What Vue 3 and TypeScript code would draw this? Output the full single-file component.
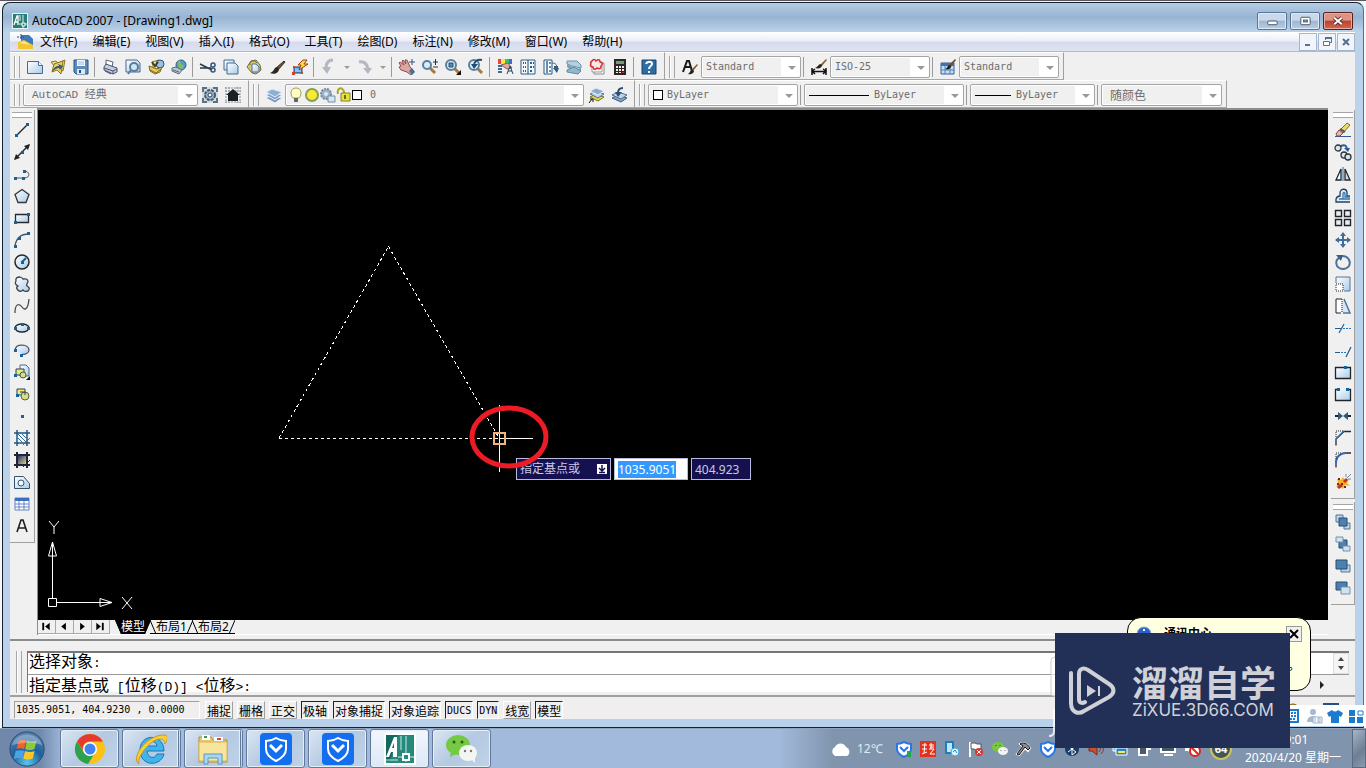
<script setup lang="ts">
import { computed, onMounted, ref } from 'vue'

interface Tool { id: string; label: string; kind?: 'sep' | 'drop' }

const t = (id: string, label: string): Tool => ({ id, label })
const sep = (id: string): Tool => ({ id, label: '', kind: 'sep' })
const drop = (id: string, label: string): Tool => ({ id, label, kind: 'drop' })

const menus = ['文件(F)', '编辑(E)', '视图(V)', '插入(I)', '格式(O)', '工具(T)', '绘图(D)', '标注(N)', '修改(M)', '窗口(W)', '帮助(H)']

const standardTools: Tool[] = [
  t('new', '新建'), t('open', '打开'), t('save', '保存'), sep('s1'),
  t('print', '打印'), t('preview', '打印预览'), t('publish', '发布'), t('web', '三维 DWF'), sep('s2'),
  t('cut', '剪切'), t('copyclip', '复制'), t('paste', '粘贴'), t('match', '特性匹配'), t('blockedit', '块编辑器'), sep('s3'),
  t('undo', '放弃'), drop('d1', '放弃列表'), t('redo', '重做'), drop('d2', '重做列表'), sep('s4'),
  t('pan', '实时平移'), t('zoomrt', '实时缩放'), t('zoomwin', '窗口缩放'), t('zoomprev', '缩放上一个'), sep('s5'),
  t('props', '特性'), t('center', '设计中心'), t('palette', '工具选项板'), t('sheet', '图纸集'), t('markup', '标记集'), t('calc', '计算器'), sep('s6'),
  t('help', '帮助'),
]

const drawTools: Tool[] = [
  t('line', '直线'), t('xline', '构造线'), t('pline', '多段线'), t('polygon', '正多边形'), t('rect', '矩形'),
  t('arc', '圆弧'), t('circle', '圆'), t('cloud', '修订云线'), t('spline', '样条曲线'), t('ellipse', '椭圆'),
  t('ellarc', '椭圆弧'), t('insert', '插入块'), t('block', '创建块'), t('point', '点'), t('hatch', '图案填充'),
  t('gradient', '渐变色'), t('region', '面域'), t('table', '表格'), t('mtext', '多行文字'),
]

const modifyTools: Tool[] = [
  t('erase', '删除'), t('copy', '复制对象'), t('mirror', '镜像'), t('offset', '偏移'), t('array', '阵列'), t('move', '移动'),
  t('rotate', '旋转'), t('scale', '缩放'), t('stretch', '拉伸'), t('trim', '修剪'), t('extend', '延伸'), t('breakpt', '打断于点'),
  t('break', '打断'), t('join', '合并'), t('chamfer', '倒角'), t('fillet', '圆角'), t('explode', '分解'),
]

const orderTools: Tool[] = [t('front', '前置'), t('back', '后置'), t('above', '置于对象之上'), t('under', '置于对象之下')]

const dot = (x: number, y: number) => `<rect x="${x - 1}" y="${y - 1}" width="3" height="3" fill="#14639c"/>`
const lens = `<path d="M9 9l5 5" stroke="#a87937" stroke-width="3"/><circle cx="6" cy="6" r="5" fill="#d9edfb" stroke="#5c7f9d" stroke-width="2"/>`
const stack = `<path d="M0 11l6-3 10 3-7 5z" fill="#7897b8" stroke="#e7eff7"/><path d="M0 8l6-3 10 3-7 5z" fill="#7fa1c5" stroke="#e7eff7"/><path d="M0 5l6-3 10 3-7 5z" fill="#8fb0d4" stroke="#e7eff7"/>`
const shield = `<path d="M8 1c2 1 4 2 7 2v5c0 4-3 6-7 8-4-2-7-4-7-8V3c3 0 5-1 7-2z" fill="#fff" stroke="#2877e8" stroke-width="2"/><path d="M4 6l4 4 4-4" fill="none" stroke="#2877e8" stroke-width="2"/>`

const glyphs: Record<string, string> = {
  new: `<path d="M.5 2.500h11l4 4v8H.5z" fill="url(#ice)" stroke="#446b91"/><path d="M11.500 2.500v4h4" fill="#fff" stroke="#446b91"/>`,
  open: `<path d="M1 3l5-1 2 2 7-3-2 11-7-3z" fill="#f2df78" stroke="#8b7521"/><path d="M2 13l2-8 9-3-2 13-4-4z" fill="#e9d162" stroke="#8b7521"/><path d="M2 13c2-5 4-6 7-6l-1-2 5 2-3 4-1-2c-2 0-4 1-7 4z" fill="#3b5a72"/>`,
  save: `<path d="M1 1h14v14H3l-2-2z" fill="#5a8cc0" stroke="#28557f"/><path d="M4 1h8v6H4z" fill="#f5f9fd"/><path d="M5 3h6M5 5h6" stroke="#9fb9d1"/><path d="M4 10h8v5H4z" fill="#dde7f0"/><path d="M6 11h2v3H6z" fill="#2b5078"/>`,
  print: `<path d="M4 1l7 2-1 5-6-2z" fill="#fff" stroke="#56637b"/><path d="M2 8l2-3 8 3 3 1v4l-4 2-9-4z" fill="#c5cee0" stroke="#46536e"/><path d="M2 9l9 3 4-2M11 12v3M3 12l6 3" fill="none" stroke="#46536e"/>`,
  preview: `<path d="M1 1h11l3 3v9H1z" fill="url(#ice)" stroke="#446b91"/><circle cx="9" cy="8" r="4" fill="#cee7f7" stroke="#5b7c99" stroke-width="2"/><path d="M6 11l-3 4" stroke="#5b7c99" stroke-width="2"/>`,
  publish: `<path d="M4 3l7-2 2 7-7 3z" fill="#faf2a4" stroke="#877727"/><circle cx="12" cy="5" r="4" fill="#9cc0e0" stroke="#27537c"/><path d="M1 7l8 3 5-2-2 5-5 2-5-3z" fill="#e8c84e" stroke="#7b6a28"/><path d="M4 3l3 4 3-4" fill="none" stroke="#493c22" stroke-width="2"/><path d="M2 11l6 3 5-4" fill="none" stroke="#7b6a28"/>`,
  web: `<circle cx="10" cy="6" r="5" fill="#539ac9" stroke="#31608e"/><path d="M8 1c3 2 0 4 4 5 2 1 0 4-2 5-3-2-4-7-2-10z" fill="#83bc68"/><path d="M1 9l4-1 6 3-3 4-7-3z" fill="#b9c6d6" stroke="#596a80"/><path d="M2 11l6 2" stroke="#596a80"/>`,
  cut: `<path d="M0 5l12 6M0 9h11" stroke="#27394c" stroke-width="1.500"/><circle cx="13" cy="6" r="2" fill="none" stroke="#34567a" stroke-width="1.500"/><circle cx="13" cy="11" r="2" fill="none" stroke="#34567a" stroke-width="1.500"/><path d="M9 9l3-2" stroke="#34567a"/>`,
  copyclip: `<path d="M1 1h10v10H1z" fill="url(#ice)" stroke="#446b91"/><path d="M4 4h8l3 3v8H4z" fill="url(#ice)" stroke="#446b91"/>`,
  paste: `<path d="M5 2l5-1 4 5 1 5-5 4-4-1-5-6z" fill="#d5c76b" stroke="#736b37"/><path d="M6 5h4l3 3v5H6z" fill="url(#ice)" stroke="#54718e"/><path d="M4 6c-1-4 4-6 7-2" fill="none" stroke="#69624a"/>`,
  match: `<path d="M15 2L7 9l2 2 7-8z" fill="#7a542d" stroke="#3c2b1b"/><path d="M8 8c-3 0-2 4-7 6 4 2 9 0 9-4z" fill="#2b2722"/>`,
  blockedit: `<path d="M2 8h8v6H2z" fill="#5a9fe5" stroke="#243f63"/><path d="M3 9l6 1v3H3z" fill="#90c1ef"/><path d="M11 1h4l-3 4h4L7 11l2-5H6z" fill="#ffd83c" stroke="#9b3e1c"/><path d="M0 13h3v3H0zM9 13h2v2H9zM1 7h2v2H1z" fill="#d54128"/>`,
  undo: `<path d="M12 1C8 1 5 3 5 9" fill="none" stroke="#b1b8c0" stroke-width="3"/><path d="M1 8h9l-4 7z" fill="#b1b8c0"/>`,
  redo: `<path d="M2 3c5-1 8 2 9 7" fill="none" stroke="#b1b8c0" stroke-width="3"/><path d="M6 9h9l-4 6z" fill="#b1b8c0"/>`,
  pan: `<path d="M2 7L0 4l1-1 4 3-2-4 1-1 3 4-1-4h2l3 7 4 4-3 4-4-3-6-2-2-3z" fill="#dda7a1" stroke="#8b4e52"/><path d="M10 12l3-3 3 4-3 3z" fill="#47709a"/><path d="M13 0v6M10 3h6" stroke="#31547a"/>`,
  zoomrt: `<path d="M8 9l5 5" stroke="#a87937" stroke-width="3"/><circle cx="5" cy="6" r="4" fill="#d9edfb" stroke="#5c7f9d" stroke-width="2"/><path d="M11 3h5M13.500 0v6M11 8h5" stroke="#20354e"/>`,
  zoomwin: lens + `<path d="M4 4h4v4H4z" fill="#4f8cbb" stroke="#244e70"/><path d="M16 11v5h-5z" fill="#111"/>`,
  zoomprev: lens + `<path d="M14 1C9 0 6 3 6 6" fill="none" stroke="#244c70" stroke-width="2"/><path d="M3 5h7l-4 5z" fill="#244c70"/>`,
  props: `<path d="M1 0h3v5H1z" fill="#e43"/><path d="M4 0h4v5H4z" fill="#ee4"/><path d="M8 0h4v5H8z" fill="#4b6"/><path d="M12 0h3v5h-3z" fill="#46d"/><path d="M4 6l7-2 4 5-5 1z" fill="#dfaaa4" stroke="#8b5b58"/><path d="M1 7h4M1 10h4M1 13h4" stroke="#3c6998" stroke-width="2"/><path d="M10 15l3-8 3 8M11 12h4" fill="none" stroke="#294664"/>`,
  center: `<path d="M1 1h14v14H1z" fill="#f4f8fb" stroke="#2f5f8a"/><path d="M8 1v14" stroke="#1d446b"/><path d="M3 4h3M3 8h3M3 12h3" stroke="#1b669e" stroke-width="2" stroke-dasharray="1 1"/><path d="M10 3h2v2h-2zM13 3h1v2h-1zM10 7h2v2h-2zM13 7h1v2h-1zM10 11h2v2h-2z" fill="#1b669e"/>`,
  palette: `<path d="M1 1h8v14H1z" fill="#f5f9fc" stroke="#285880"/><path d="M4 2v12M6 4h2M6 8h2M6 12h2" stroke="#3a6991" stroke-width="1.500"/><path d="M9 4c4 0 5 2 5 6" fill="none" stroke="#355e7f"/><path d="M11 7h4v3h-4zM10 9h6l-2 5z" fill="#345d80"/>`,
  sheet: `<path d="M1 2h10l4 4v3l-9-2-5-2z" fill="#b5d0df" stroke="#6991b2"/><path d="M1 5l9 5 5-1v3l-7 2-7-6z" fill="#79a4bd"/><path d="M1 11l7-3 7 4-3 3-11-2z" fill="#8fb8cc" stroke="#6289a6"/>`,
  markup: `<path d="M5 4h10v11H5z" fill="#fff" stroke="#888"/><path d="M3 3h10v10H3z" fill="#f8f6f6" stroke="#999"/><path d="M3 2q2-3 4 0 4-3 4 1 4 1 1 4 0 4-4 2-3 3-4-1-4-1-2-3-1-2 1-3z" fill="#fbe7e6" stroke="#d42e2d" stroke-width="1.500"/>`,
  calc: `<path d="M2 0h12v16H2z" fill="#2d2524"/><path d="M4 2h8v3H4z" fill="#6b9f78"/><path d="M4 7h2v2H4zM7 7h2v2H7zM10 7h2v2h-2zM4 10h2v2H4zM7 10h2v2H7zM10 10h2v2h-2zM4 13h2v1H4zM7 13h2v1H7z" fill="#eee"/><path d="M10 13h2v1h-2z" fill="#d22"/>`,
  help: `<path d="M1 1h14v14H1z" fill="#2e6ca4" stroke="#17466f"/><path d="M5 5c1-3 6-3 6 0 0 2-3 2-3 5" fill="none" stroke="#fff" stroke-width="2"/><path d="M7 12h2v2H7z" fill="#fff"/>`,
  gear: `<path d="M0 0h16v16H0z" fill="#d4dce2"/><path d="M0 0h5v2H2v3H0zM11 0h5v5h-2V2h-3zM0 11h2v3h3v2H0zM14 11h2v5h-5v-2h3z" fill="#5b7184"/><circle cx="8" cy="8" r="5" fill="#9fb4c5" stroke="#40586e" stroke-width="2" stroke-dasharray="3 1"/><circle cx="8" cy="8" r="2" fill="#fff" stroke="#25405a"/>`,
  home: `<path d="M1 0v16M4 0v16M12 0v16M15 0v16M0 1h16M0 4h16M0 15h16" stroke="#8b9299" stroke-dasharray="2 1"/><path d="M8 2l7 6h-2v6H3V8H1z" fill="#1c2024"/>`,
  layers: stack,
  bulb: `<path d="M5 11C2 8 2 1 8 1s6 7 3 10z" fill="#ffffc4" stroke="#a39d52"/><path d="M6 12h4M6 14h4" stroke="#666" stroke-width="2"/>`,
  sun: `<circle cx="8" cy="8" r="6" fill="#f7ec31" stroke="#8d9c55" stroke-width="2"/>`,
  freeze: `<circle cx="6" cy="7" r="5" fill="#9eb5c9" stroke="#6f8ba5" stroke-width="2" stroke-dasharray="2 1"/><circle cx="6" cy="7" r="2" fill="#dbe6ee"/><path d="M8 9h7v6H8z" fill="#d9e6ee" stroke="#7190a8"/>`,
  lock: `<path d="M2 7C0 1 7-1 8 5v3" fill="none" stroke="#a9a62b" stroke-width="2"/><path d="M5 6h9v8H5z" fill="#e4e13c" stroke="#85841e"/><path d="M9 8v4" stroke="#6c6a10" stroke-width="2"/>`,
  makelayer: `<path d="M2 10l6-3 8 3-6 4z" fill="#e6d648" stroke="#777126"/><path d="M2 7l6-3 8 3-6 4z" fill="#bcd4e8" stroke="#54708c"/><path d="M2 4l6-3 8 3-6 4z" fill="#8caccc" stroke="#e7eff7"/><path d="M1 16l3-4M2 12h3v3" fill="none" stroke="#111"/>`,
  layerprev: `<path d="M1 11l6-3 9 3-6 4z" fill="#7fa1c5" stroke="#415f80"/><path d="M1 8l6-3 9 3-6 4z" fill="#bcd4e8" stroke="#54708c"/><path d="M12 1C8 1 7 3 7 6" fill="none" stroke="#294f75" stroke-width="2"/><path d="M4 5h7l-4 5z" fill="#294f75"/>`,
  textstyle: `<path d="M1 13L5 2h2l3 10M3 8h6" fill="none" stroke="#17191c" stroke-width="2"/><path d="M15 5l-5 5 1 2 5-6z" fill="#8a6130"/><path d="M10 10c-2 1-1 3-4 5 3 1 6-1 6-3z" fill="#24211e"/>`,
  dimstyle: `<path d="M1 9v7M15 9v7M1 12.500h14M4 10l-3 2 3 3M12 10l3 2-3 3" fill="none" stroke="#111" stroke-width="1.500"/><path d="M15 0L9 6l2 1 5-6z" fill="#8a6130"/><path d="M9 5c-2 1-2 3-5 4 4 1 7 0 7-3z" fill="#24211e"/>`,
  tablestyle: `<path d="M1 4h13v11H1z" fill="#c7def5" stroke="#315f94"/><path d="M1 4h13v3H1z" fill="#3e72b0"/><path d="M5 7v8M10 7v8M1 11h13" stroke="#4e82bb"/><path d="M15 0L9 6l2 2 5-7z" fill="#73502d"/><path d="M9 6c-2 1-1 3-4 4 3 1 6 0 6-3z" fill="#24211e"/>`,
  line: `<path d="M2 14L14 2" stroke="#262a2e" stroke-width="1.500"/>` + dot(2, 13) + dot(13, 2),
  xline: `<path d="M1 15L15 1" stroke="#262a2e" stroke-width="1.500"/><path d="M0 16l2-6 4 4zM16 0l-6 2 4 4z" fill="#222"/>` + dot(8, 8),
  pline: `<path d="M1 12h9c7 0 6-7 0-7" fill="none" stroke="#4c555d"/>` + dot(1, 12) + dot(9, 12) + dot(10, 5),
  polygon: `<path d="M8 1.500l7 5-3 8H4l-3-8z" fill="url(#ice)" stroke="#32373d" stroke-width="1.300"/>`,
  rect: `<path d="M1.500 4.500h13v8h-13z" fill="url(#ice)" stroke="#262a2e" stroke-width="1.300"/>` + dot(1, 12) + dot(14, 4),
  arc: `<path d="M1 14C2 7 6 2 15 2" fill="none" stroke="#4c555d" stroke-width="1.300"/>` + dot(1, 14) + dot(5, 6) + dot(14, 1),
  circle: `<circle cx="8" cy="8" r="7" fill="url(#ice)" stroke="#24282c" stroke-width="1.500"/><path d="M8 8l4-4" stroke="#14639c" stroke-width="2"/>` + dot(8, 8),
  cloud: `<path d="M2 5q-1-4 4-4 3 1 3 2 5-1 5 3-2 3-1 4 4 2 1 5-4 1-5-1-3 3-6-1-1-2 1-3-4-2-2-5z" fill="url(#ice)" stroke="#3c4147" stroke-width="1.300"/>`,
  spline: `<path d="M1 15C1 4 6 6 8 9s6 4 7-8" fill="none" stroke="#4a4e52" stroke-width="1.300"/>`,
  ellipse: `<ellipse cx="8" cy="8" rx="7" ry="4" fill="url(#ice)" stroke="#24282c" stroke-width="1.300"/>` + dot(1, 8) + dot(14, 8) + dot(8, 4),
  ellarc: `<path d="M1 8C2 1 15 2 15 8c0 3-4 5-7 4" fill="url(#ice)" stroke="#4a5663" stroke-width="1.300"/>` + dot(1, 8) + dot(7, 13),
  insert: `<path d="M6 1h6l3 3v8H6z" fill="url(#ice)" stroke="#496b8b"/><path d="M2 5h8v6H2z" fill="#e9e979" stroke="#26435e"/><circle cx="9" cy="11" r="3" fill="#d7df83" stroke="#4f5950"/><path d="M16 12v4h-4z" fill="#111"/>` + dot(1, 11),
  block: `<path d="M3 3h8v6H3z" fill="#eaea75" stroke="#26435e"/><circle cx="11" cy="10" r="4" fill="#d7df83" stroke="#59614d"/><path d="M6 6h5v3" fill="none" stroke="#26435e"/>` + dot(3, 9),
  point: `<path d="M7 7h3v3H7z" fill="#14639c"/>`,
  hatch: `<path d="M3 0v16M13 0v16M0 3h16M0 13h16" stroke="#225581" stroke-width="1.500"/><path d="M4 4h8v8H4z" fill="#f1f8fd"/><path d="M4 8l4 4M4 4l8 8M8 4l4 4M9 15l7-7" stroke="#3c6f98"/>`,
  gradient: `<path d="M3 0v16M13 0v16M0 3h16M0 13h16" stroke="#202437" stroke-width="2"/><path d="M4 4h8v8H4z" fill="url(#dusk)"/><path d="M9 15l7-7" stroke="#202437"/>`,
  region: `<path d="M.5 2.500h9l6 7v5H.5z" fill="url(#ice)" stroke="#35536f"/><circle cx="7" cy="9" r="3" fill="#f5f8fa" stroke="#35536f"/>`,
  table: `<path d="M1 2h14v12H1z" fill="#fff" stroke="#5e83c8"/><path d="M1 2h14v3H1z" fill="#3c6fc2"/><path d="M5 5v9M10 5v9M1 8h14M1 11h14" stroke="#6688c7"/>`,
  mtext: `<path d="M3 14L7 2h2l4 12M4 10h8" fill="none" stroke="#1b1d20" stroke-width="1.600"/>`,
  erase: `<path d="M0 14.500h16" stroke="#2d5c94"/><path d="M12 1l3 2-7 8-4-2z" fill="#e8da69" stroke="#78733b"/><path d="M4 8l4 3-3 3H2l-1-2z" fill="#f1b4a8" stroke="#83483f"/><path d="M5 7l5 3" stroke="#4d4e53" stroke-width="2"/>`,
  copy: `<circle cx="3" cy="4" r="3" fill="#dce6ee" stroke="#30363c" stroke-width="1.300"/><circle cx="9" cy="11" r="3" fill="#dce6ee" stroke="#30363c" stroke-width="1.300"/><circle cx="13" cy="13" r="3" fill="#dce6ee" stroke="#30363c" stroke-width="1.300"/><path d="M6 2c4-2 6 0 6 4" fill="none" stroke="#285d98" stroke-width="2"/><path d="M9 4h6l-2 4z" fill="#285d98"/>`,
  mirror: `<path d="M1 14L6 3v11z" fill="#fff" stroke="#23272b" stroke-width="1.300"/><path d="M10 14V3l5 11z" fill="#cadef2" stroke="#23272b" stroke-width="1.300"/><path d="M8 1v14" stroke="#2468a2"/>`,
  offset: `<path d="M15 14H1v-3q1-3 4-3V5c0-5 7-5 7 0v3h3" fill="#e4edf6" stroke="#26415e" stroke-width="1.300"/><path d="M15 11H4h4V6c0-2 2-2 2 0v3h5" fill="none" stroke="#2e76b5" stroke-width="1.300"/>`,
  array: `<path d="M.5.5h6v6h-6zM9.500.5h6v6h-6zM.5 9.500h6v6h-6zM9.500 9.500h6v6h-6z" fill="#e8eef5" stroke="#202428" stroke-width="1.400"/>`,
  move: `<path d="M8 1v14M1 8h14" stroke="#3f6d9c" stroke-width="2"/><path d="M8 0l3 4H5zM8 16l3-4H5zM0 8l4-3v6zM16 8l-4-3v6z" fill="#3f6d9c"/>`,
  rotate: `<path d="M7 2c7 0 9 6 7 10-3 4-9 4-12 0C0 8 2 5 4 4" fill="none" stroke="#4f7196" stroke-width="2"/><path d="M1 1h7l-2 6z" fill="#365f88"/>`,
  scale: `<path d="M1 1h14v14H9" fill="url(#ice)"/><path d="M1 7V1h14v14H9" fill="none" stroke="#54779b"/><path d="M1 8h7v7H1z" fill="#fff" stroke="#222" stroke-dasharray="1 1"/>`,
  stretch: `<path d="M8 1l7 13H6z" fill="#d8e6f4"/><path d="M7 1H1v14h5" fill="#fff" stroke="#222"/><path d="M7 1v14" stroke="#222" stroke-dasharray="1 1"/><path d="M9 1l6 14H8" fill="none" stroke="#4e7398" stroke-width="1.500"/>`,
  trim: `<path d="M0 8.500h6" stroke="#235b92"/><path d="M8 8.500h8" stroke="#2876bd" stroke-dasharray="2 1"/><path d="M4 13L9 4" stroke="#30689c" stroke-width="1.300"/>`,
  extend: `<path d="M0 10.500h5" stroke="#235b92"/><path d="M6 10.500h6" stroke="#2876bd" stroke-dasharray="2 1"/><path d="M11 15L16 5" stroke="#235b92" stroke-width="1.300"/>`,
  breakpt: `<path d="M.5 3.500h15v11H.5z" fill="url(#ice)" stroke="#202428" stroke-width="1.300"/>` + dot(10, 3),
  break: `<path d="M.5 3.500h15v11H.5z" fill="url(#ice)"/><path d="M3 3.500H.5v11h15v-11H13" fill="none" stroke="#202428" stroke-width="1.300"/>` + dot(3, 3) + dot(12, 3),
  join: `<path d="M0 8h5M11 8h5" stroke="#222" stroke-width="2"/><path d="M3 4l5 4-5 4zM13 4L8 8l5 4z" fill="#2d587e"/>`,
  chamfer: `<path d="M1 15.500V9l8-7.500h7" fill="none" stroke="#25292e" stroke-width="1.300"/><path d="M1 9l8-8" stroke="#2e69a3" stroke-width="1.500"/><path d="M1 7V1h7" fill="none" stroke="#222" stroke-dasharray="1 1"/>`,
  fillet: `<path d="M1 15.500V11C1 4 6 1 11 1h5" fill="none" stroke="#25292e" stroke-width="1.300"/><path d="M1 11C1 4 6 1 11 1" fill="none" stroke="#2e69bd" stroke-width="2"/><path d="M1 7V1h6" fill="none" stroke="#222" stroke-dasharray="1 1"/>`,
  explode: `<path d="M2 5l4 1 2-3 2 3 4-1-2 4 3 3-5-1-2 4-3-3-4 1 2-4z" fill="#f4ae27"/><path d="M3 4h2v2H3zM6 9h2v2H6zM2 9h2v2H2zM9 12h2v2H9z" fill="#6d2a16"/><path d="M2 13l3-3 3 2-4 3z" fill="#c72d20"/><path d="M8 7l3-3 2 2-3 3z" fill="#c72d20"/><path d="M12 4l4-4M13 5h3M11 3V0" stroke="#76899d"/>`,
  front: `<path d="M1 1h7v7H1zM9 9h6v6H9z" fill="#bed4e8" stroke="#557693"/><path d="M4 4h8v8H4z" fill="#4d80b1" stroke="#294e73"/>`,
  back: `<path d="M4 4h8v8H4z" fill="#4d80b1" stroke="#294e73"/><path d="M1 1h7v5H1zM8 10h7v5H8z" fill="#d4e2ef" stroke="#7391aa"/>`,
  above: `<path d="M6 7h9v7H6z" fill="#bed4e8" stroke="#557693"/><path d="M1 2h11v9H1z" fill="#4d80b1" stroke="#294e73"/>`,
  under: `<path d="M1 2h11v8H1z" fill="#4d80b1" stroke="#294e73"/><path d="M6 7h9v7H6z" fill="#d4e2ef" stroke="#7391aa"/>`,
  acad: `<path d="M0 0h16v16H0z" fill="#e9f5f3"/><path d="M1 1h14v14H1z" fill="#267f76"/><path d="M2 12L5 3h1v9M3 9h3" fill="none" stroke="#fff" stroke-width="1.300"/><path d="M8 2v6M11 2v13M7 11h9" stroke="#d7f4ee"/><path d="M10 10h3v3h-3z" fill="#267f76" stroke="#fff"/>`,
  dwg: `<path d="M4 1h8l4 4v10H4z" fill="#3d79bb"/><path d="M1 8l6-2 9 5v4H1z" fill="#f2c62e"/><path d="M2 9l5-2 6 4z" fill="#fbe48c"/><path d="M0 3h7M4 0v6" stroke="#274f75" stroke-dasharray="2 1"/>`,
  shieldok: shield + `<path d="M11 10h4v6h-4z" fill="#25a646"/>`,
  seal: `<path d="M0 0h16v16H0z" fill="#e2311d"/><path d="M2 4h5M5 2L4 12M2 8h5M2 13l5-2M9 4h5M11 2v6M9 8h5l-4 5h5M10 6h4" fill="none" stroke="#fff"/>`,
  device: `<path d="M2 1h7v11H2z" fill="#bce7fb" stroke="#1780bd" stroke-width="2"/><circle cx="11" cy="11" r="4" fill="#def4fd" stroke="#48a6d5"/><path d="M9 11l2-2 2 3" fill="none" stroke="#258abd"/>`,
  flag: `<path d="M2 1v15" stroke="#fff" stroke-width="2"/><path d="M3 2h4l2 1h4v6H8L6 8H3z" fill="#fff" stroke="#555"/><circle cx="11" cy="11" r="4" fill="#d63832"/><path d="M9 9l4 4M13 9l-4 4" stroke="#fff"/>`,
  wechat: `<ellipse cx="6" cy="6" rx="6" ry="5" fill="#78c83b"/><ellipse cx="11" cy="10" rx="5" ry="4" fill="#f4f6f2"/><path d="M4 4v1M8 4v1" stroke="#285c1c"/><path d="M9 9v1M13 9v1" stroke="#777"/>`,
  hammer: `<path d="M4 3c3-2 7-1 10 4l-2 3-3-3-6 7-2-1 6-7z" fill="#666" stroke="#fff" stroke-width="2"/><path d="M4 3c3-2 7-1 10 4l-2 2-3-3-6 8-2-1 6-8z" fill="#8d8d8d" stroke="#111"/>`,
  shield,
  bluetooth: `<circle cx="8" cy="8" r="7" fill="#173c6c"/><path d="M4 5l8 6-4 3V2l4 3-8 6" fill="none" stroke="#fff"/>`,
  sound: `<path d="M1 6h3l5-4v12l-5-4H1z" fill="#c65132" stroke="#7b2b1c"/><path d="M11 5q3 3 0 6M13 3q5 5 0 10" fill="none" stroke="#8a3b2c"/>`,
  net: `<path d="M1 2h9v8H1z" fill="#71c0f1" stroke="#fff"/><path d="M4 7h11v7H4z" fill="#2e82c0" stroke="#fff"/><path d="M6 11h7" stroke="#fee45b" stroke-width="2"/>`,
  power: `<path d="M3 2h8v12H3z" fill="#4b5968" stroke="#fff" stroke-width="2"/><path d="M10 4h5v5h-5z" fill="#fff"/>`,
  monitor: `<path d="M1 2h14v9H1z" fill="#485869" stroke="#fff" stroke-width="2"/><path d="M4 14h9" stroke="#fff" stroke-width="2"/>`,
  mute: `<path d="M1 6h3l5-4v12l-5-4H1z" fill="#fff"/><circle cx="11" cy="10" r="5" fill="#fff" stroke="#dc251f" stroke-width="2"/><path d="M8 7l6 6" stroke="#dc251f" stroke-width="2"/>`,
  keyboard: `<path d="M1 2h12v12H1z" fill="none" stroke="#1b7bd0" stroke-width="2"/><path d="M3 5h9M3 8h9M5 11h5" stroke="#1b7bd0" stroke-width="2" stroke-dasharray="2 1"/>`,
  person: `<circle cx="7" cy="4" r="3" fill="#a5b9d4"/><path d="M1 14c0-8 12-8 12 0z" fill="#a5b9d4"/><path d="M7 9h9v6H7z" fill="#fff" stroke="#9daec8"/><path d="M9 10v4M12 10h2v4h-2z" fill="none" stroke="#9daec8"/>`,
  shirt: `<path d="M5 2q3 3 6 0l5 3-2 4-2-1v7H4V8L2 9 0 5z" fill="#1b7bd0"/>`,
  grid: `<path d="M1 2h6v6H1zM1 9h6v6H1zM9 9h6v6H9z" fill="#1b7bd0"/><path d="M10 3h5v4h-5z" fill="#fff" stroke="#1b7bd0"/>`,
}

const tray = ['shieldok', 'seal', 'device', 'flag', 'wechat', 'hammer', 'shield', 'bluetooth', 'sound', 'net', 'power', 'monitor', 'mute']

const modes = ref([
  { name: '捕捉', on: false }, { name: '栅格', on: false }, { name: '正交', on: false }, { name: '极轴', on: true },
  { name: '对象捕捉', on: true }, { name: '对象追踪', on: true }, { name: 'DUCS', on: true }, { name: 'DYN', on: true },
  { name: '线宽', on: false }, { name: '模型', on: true },
])

const layouts = ['模型', '布局1', '布局2']
const activeLayout = ref('模型')

// Splits text so that Latin and Chinese runs can take their own size.
const runs = (s: string) => (s.match(/[\x00-\x7f]+|[^\x00-\x7f]+/g) ?? []).map(text => ({ text, latin: text.charCodeAt(0) < 128 }))
const history = runs('选择对象:')
const prompt = runs('指定基点或 [位移(D)] <位移>:')

const base = ref({ x: '1035.9051', y: '404.923' })
const coords = computed(() => `${base.value.x}, 404.9230 , 0.0000`)

const xField = ref<HTMLInputElement | null>(null)
onMounted(() => {
  xField.value?.focus({ preventScroll: true })
  xField.value?.select()
})
</script>

<template>
  <div class="desktop">
    <svg class="defs" aria-hidden="true">
      <defs>
        <linearGradient id="ice" x1="0" y1="0" x2="1" y2="1"><stop offset="0" stop-color="#fff" /><stop offset="1" stop-color="#a9cbea" /></linearGradient>
        <linearGradient id="dusk" x1="0" y1="0" x2="1" y2="1"><stop offset="0" stop-color="#2b3069" /><stop offset="1" stop-color="#d8d18a" /></linearGradient>
      </defs>
    </svg>

    <main class="window">
      <header class="title">
        <svg class="ico" viewBox="0 0 16 16" v-html="glyphs.acad" />
        <h1>AutoCAD 2007 - [Drawing1.dwg]</h1>
        <div class="caption">
          <button aria-label="最小化"><svg viewBox="0 0 30 17"><rect x="10.500" y="8.500" width="10" height="4" rx="1" fill="#fff" stroke="#3f4d63" /></svg></button>
          <button aria-label="还原"><svg viewBox="0 0 30 17"><rect x="10.500" y="4.500" width="10" height="8" rx="1" fill="#fff" stroke="#3f4d63" /><rect x="13.500" y="7.500" width="4" height="2" fill="#9fb8d2" stroke="#3f4d63" /></svg></button>
          <button class="close" aria-label="关闭"><svg viewBox="0 0 30 17"><path d="M11 5l8 7M19 5l-8 7" stroke="#5c3030" stroke-width="4" /><path d="M11 5l8 7M19 5l-8 7" stroke="#fff" stroke-width="2" /></svg></button>
        </div>
      </header>

      <nav class="menu">
        <svg class="ico" viewBox="0 0 16 16" v-html="glyphs.dwg" />
        <button v-for="m in menus" :key="m">{{ m }}</button>
        <div class="mdi">
          <button aria-label="最小化文档"><svg viewBox="0 0 16 16"><path d="M5 11h5" stroke="#56708f" stroke-width="2" /></svg></button>
          <button aria-label="还原文档"><svg viewBox="0 0 16 16"><path d="M6.500 6V4.500h6v4H11" fill="none" stroke="#56708f" /><path d="M6 4h7" stroke="#56708f" stroke-width="2" /><path d="M4.500 7.500h6v4h-6z" fill="#fff" stroke="#56708f" /></svg></button>
          <button aria-label="关闭文档"><svg viewBox="0 0 16 16"><path d="M5 5l6 6M11 5l-6 6" stroke="#56708f" stroke-width="2" /></svg></button>
        </div>
      </nav>

      <div class="bars">
        <div class="bar" role="toolbar" aria-label="标准">
          <i class="grip" />
          <template v-for="b in standardTools" :key="b.id">
            <i v-if="b.kind === 'sep'" class="sep" />
            <button v-else-if="b.kind === 'drop'" class="drop" :aria-label="b.label"><i class="arrow" /></button>
            <button v-else class="tool" :aria-label="b.label"><svg class="ico" viewBox="0 0 16 16" v-html="glyphs[b.id]" /></button>
          </template>
        </div>
        <div class="bar" role="toolbar" aria-label="样式">
          <i class="grip" />
          <button class="tool" aria-label="文字样式"><svg class="ico" viewBox="0 0 16 16" v-html="glyphs.textstyle" /></button>
          <div class="combo w100"><select aria-label="当前文字样式"><option>Standard</option></select><i class="arrow" /></div>
          <i class="sep" />
          <button class="tool" aria-label="标注样式"><svg class="ico" viewBox="0 0 16 16" v-html="glyphs.dimstyle" /></button>
          <div class="combo w100"><select aria-label="当前标注样式"><option>ISO-25</option></select><i class="arrow" /></div>
          <i class="sep" />
          <button class="tool" aria-label="表格样式"><svg class="ico" viewBox="0 0 16 16" v-html="glyphs.tablestyle" /></button>
          <div class="combo w100"><select aria-label="当前表格样式"><option>Standard</option></select><i class="arrow" /></div>
        </div>
      </div>

      <div class="bars">
        <div class="bar" role="toolbar" aria-label="工作空间">
          <i class="grip" />
          <div class="combo w175 mixed"><select aria-label="工作空间"><option>AutoCAD 经典</option></select><i class="arrow" /></div>
          <button class="tool" aria-label="工作空间设置"><svg class="ico" viewBox="0 0 16 16" v-html="glyphs.gear" /></button>
          <button class="tool" aria-label="我的工作空间"><svg class="ico" viewBox="0 0 16 16" v-html="glyphs.home" /></button>
        </div>
        <div class="bar" role="toolbar" aria-label="图层">
          <i class="grip" />
          <button class="tool" aria-label="图层特性管理器"><svg class="ico" viewBox="0 0 16 16" v-html="glyphs.layers" /></button>
          <div class="combo w298 layer">
            <span class="states">
              <svg v-for="g in ['bulb', 'sun', 'freeze', 'lock']" :key="g" class="ico" viewBox="0 0 16 16" v-html="glyphs[g]" />
              <i class="swatch" />
            </span>
            <select aria-label="图层"><option>0</option></select><i class="arrow" />
          </div>
          <button class="tool" aria-label="将对象的图层置为当前"><svg class="ico" viewBox="0 0 16 16" v-html="glyphs.makelayer" /></button>
          <button class="tool" aria-label="上一个图层"><svg class="ico" viewBox="0 0 16 16" v-html="glyphs.layerprev" /></button>
        </div>
        <div class="bar" role="toolbar" aria-label="对象特性">
          <i class="grip" />
          <div class="combo w150 lead"><i class="swatch" /><select aria-label="颜色"><option>ByLayer</option></select><i class="arrow" /></div>
          <i class="sep" />
          <div class="combo w160 lead"><i class="rule long" /><select aria-label="线型"><option>ByLayer</option></select><i class="arrow" /></div>
          <i class="sep" />
          <div class="combo w125 lead"><i class="rule" /><select aria-label="线宽"><option>ByLayer</option></select><i class="arrow" /></div>
          <i class="sep" />
          <div class="combo w120 han"><select aria-label="打印样式"><option>随颜色</option></select><i class="arrow" /></div>
        </div>
      </div>

      <div class="work">
        <aside class="dock">
          <div class="vbar" role="toolbar" aria-label="绘图">
            <i class="vgrip" />
            <button v-for="b in drawTools" :key="b.id" class="tool" :aria-label="b.label"><svg class="ico" viewBox="0 0 16 16" v-html="glyphs[b.id]" /></button>
          </div>
        </aside>

        <section class="sheet">
          <div class="canvas">
            <svg class="layer-fill" aria-hidden="true">
              <g fill="none" stroke="#fff" stroke-width="1" shape-rendering="crispEdges">
                <path d="M240.500 328.500H461M241 328L350.500 136.500M350.500 136.500L461 328" stroke-dasharray="3 3" />
                <path d="M461.500 295v67M461 328.500h34" />
              </g>
              <rect x="456" y="323" width="11" height="11" fill="none" stroke="#f2b27c" stroke-width="2" />
            </svg>
            <svg class="ucs" viewBox="0 0 100 100" aria-hidden="true">
              <g fill="none" stroke="#fff">
                <path d="M10.500 78.500h8v8h-8zM14.500 78V26M19 82.500h54M14.500 22l-4 14h8zM14.500 22v14M74 82.500l-12-4v8zM62 82.500h12" />
                <path d="M11 1l5 6 5-6M16 7v7M84 77l10 12M94 77L84 89" />
              </g>
            </svg>
            <div class="dyn">
              <label class="cell ask" for="base-x">指定基点或
                <svg viewBox="0 0 10 10"><path d="M0 0h10v10H0z" fill="#fff" /><path d="M5 1v5M2 4l3 3 3-3M2 8.500h6" fill="none" stroke="#15104f" stroke-width="1.500" /></svg>
              </label>
              <input id="base-x" ref="xField" v-model="base.x" class="cell xval">
              <input v-model="base.y" class="cell yval" aria-label="Y 坐标">
            </div>
            <svg class="layer-fill over" aria-hidden="true"><ellipse cx="471" cy="327" rx="37" ry="29" fill="none" stroke="#ed1c24" stroke-width="5" /></svg>
          </div>
          <div class="tabs">
            <button class="nav" aria-label="第一个"><svg viewBox="0 0 16 14"><path d="M5 3v8" stroke="#000" stroke-width="2" /><path d="M12 3v8L7 7z" /></svg></button>
            <button class="nav" aria-label="上一个"><svg viewBox="0 0 16 14"><path d="M10 3v8L5 7z" /></svg></button>
            <button class="nav" aria-label="下一个"><svg viewBox="0 0 16 14"><path d="M6 3v8l5-4z" /></svg></button>
            <button class="nav" aria-label="最后一个"><svg viewBox="0 0 16 14"><path d="M4 3v8l5-4z" /><path d="M11 3v8" stroke="#000" stroke-width="2" /></svg></button>
            <button v-for="l in layouts" :key="l" class="tab" :class="{ on: l === activeLayout }" @click="activeLayout = l">
              <svg class="edge" viewBox="0 0 6 14"><path d="M0 0l6 14" stroke="#000" fill="none" /></svg>
              <span>{{ l }}</span>
              <svg class="edge" viewBox="0 0 6 14"><path d="M6 0L0 14" stroke="#000" fill="none" /></svg>
            </button>
          </div>
        </section>

        <aside class="dock right">
          <div class="vbar" role="toolbar" aria-label="修改">
            <i class="vgrip" />
            <button v-for="b in modifyTools" :key="b.id" class="tool" :aria-label="b.label"><svg class="ico" viewBox="0 0 16 16" v-html="glyphs[b.id]" /></button>
          </div>
          <div class="vbar" role="toolbar" aria-label="绘图次序">
            <i class="vgrip" />
            <button v-for="b in orderTools" :key="b.id" class="tool" :aria-label="b.label"><svg class="ico" viewBox="0 0 16 16" v-html="glyphs[b.id]" /></button>
          </div>
        </aside>
      </div>

      <section class="command">
        <i class="grip" />
        <div class="lines">
          <div class="history">
            <p><span v-for="(r, i) in history" :key="i" :class="{ latin: r.latin }">{{ r.text }}</span></p>
            <div class="spin">
              <button aria-label="向上滚动"><svg viewBox="0 0 8 8"><path d="M1 6h6L4 2z" fill="#444" /></svg></button>
              <button aria-label="向下滚动"><svg viewBox="0 0 8 8"><path d="M1 2h6L4 6z" fill="#444" /></svg></button>
            </div>
          </div>
          <div class="entry">
            <p><span v-for="(r, i) in prompt" :key="i" :class="{ latin: r.latin }">{{ r.text }}</span></p>
            <button class="hscroll" aria-label="向右滚动"><svg viewBox="0 0 8 10"><path d="M2 1v8l4-4z" fill="#222" /></svg></button>
          </div>
        </div>
      </section>

      <footer class="status">
        <output class="coords">{{ coords }}</output>
        <button v-for="m in modes" :key="m.name" :class="{ on: m.on }" :aria-pressed="m.on" @click="m.on = !m.on">{{ m.name }}</button>
        <svg class="statusicon comm" viewBox="0 0 16 16" aria-hidden="true"><circle cx="8" cy="8" r="6" fill="#e9b92c" stroke="#6d5a1e" /></svg>
        <svg class="statusicon" viewBox="0 0 16 16" aria-hidden="true"><path d="M1 2h14v10H1z" fill="#fff" stroke="#254f86" stroke-width="2" /><path d="M4 5h8v5H4z" fill="none" stroke="#254f86" /></svg>
      </footer>
    </main>

    <footer class="taskbar">
      <button class="start" aria-label="开始">
        <svg viewBox="0 0 40 40">
          <defs><radialGradient id="orb" cx=".5" cy=".9" r=".9"><stop offset="0" stop-color="#58c8ec" /><stop offset=".5" stop-color="#1d5f9c" /><stop offset="1" stop-color="#5b87b3" /></radialGradient></defs>
          <circle cx="20" cy="20" r="18" fill="url(#orb)" stroke="#2c4769" />
          <path d="M11 12c3-2 5-2 8-1l-2 9c-3-1-5-1-8 0z" fill="#f0642c" /><path d="M20 11c3 1 6 2 10 0l-2 9c-4 2-7 1-10 0z" fill="#8ec63f" />
          <path d="M8 22c3-1 6-1 9 0l-2 8c-3-1-6-1-9 1z" fill="#4ba3e3" /><path d="M18 22c3 1 6 2 10 0l-2 8c-4 2-7 1-10 0z" fill="#fbc52c" />
          <path d="M4 16C9 1 31 1 36 16 26 12 14 13 4 16z" fill="#fff" opacity=".3" />
        </svg>
      </button>
      <button class="app" aria-label="Chrome">
        <svg viewBox="0 0 32 32"><circle cx="16" cy="16" r="15" fill="#fbc116" /><path d="M3 8.500A15 15 0 0 1 29 8.500H16c-5 0-8 4-7 9z" fill="#e33b2e" /><path d="M3 8.500A15 15 0 0 0 14 31l7-11c-4 5-10 3-12-2z" fill="#2ea14f" /><circle cx="16" cy="16" r="7" fill="#fff" /><circle cx="16" cy="16" r="5.500" fill="#4183f0" /></svg>
      </button>
      <button class="app multi" aria-label="Internet Explorer">
        <svg viewBox="0 0 32 32"><path d="M29 21c-3 13-24 13-24-4S29 0 29 18H12c1 8 8 8 10 3zM12 13h10c-1-6-9-6-10 0z" fill="#41b4eb" stroke="#1b76b8" /><path d="M4 31C-5 25 12 1 30 2c4 1 2 6 0 9 0-7-8-6-14-1C9 16 2 25 4 31z" fill="#f6cf3a" stroke="#c9981c" /></svg>
      </button>
      <button class="app multi" aria-label="资源管理器">
        <svg viewBox="0 0 32 32"><path d="M2 4h12l2 3h14v22H2z" fill="#e8c867" stroke="#b3903a" /><path d="M5 2h8v5H5zM17 4h9v4h-9z" fill="#fff" /><path d="M7 3h3v2H7z" fill="#3a9b57" /><path d="M20 5h4v2h-4z" fill="#d24a35" /><path d="M2 9h28v19H2z" fill="#f8e49c" stroke="#d7b85d" /><path d="M7 31V21h18v10h-4v-6H11v6z" fill="#a9d7f2" stroke="#5298c8" /></svg>
      </button>
      <button v-for="n in 2" :key="n" class="app" aria-label="电脑管家">
        <svg viewBox="0 0 32 32"><rect width="32" height="32" rx="4" fill="#146ff0" /><path d="M16 5c3 2 6 3 10 3v8c0 5-4 9-10 12C10 25 6 21 6 16V8c4 0 7-1 10-3z" fill="none" stroke="#fff" stroke-width="2" /><path d="M10 12l6 6 6-6" fill="none" stroke="#fff" stroke-width="3" /></svg>
      </button>
      <button class="app current" aria-label="AutoCAD 2007">
        <svg viewBox="0 0 32 32"><path d="M0 0h32v32H0z" fill="#fff" /><path d="M2 2h28v28H2z" fill="#26897c" /><path d="M2 2h12l-8 26H2z" fill="#12695f" /><path d="M2 24L10 4h3v20h-4v-5H7l-2 5zM8 15h2v-5z" fill="#fff" fill-rule="evenodd" /><path d="M2 27h12M22 3v26M14 24h16M17 3v14" stroke="#c5eee6" /><path d="M19 21h6v6h-6z" fill="#26897c" stroke="#fff" stroke-width="2" /></svg>
      </button>
      <button class="app" aria-label="微信">
        <svg viewBox="0 0 32 32"><ellipse cx="12" cy="12" rx="12" ry="10" fill="#76c942" /><path d="M5 18l-1 6 6-3z" fill="#76c942" /><ellipse cx="22" cy="20" rx="9" ry="8" fill="#f4f7f1" /><path d="M25 26l4 4v-6z" fill="#f4f7f1" /><g fill="#2b5a22"><circle cx="8" cy="9" r="1.500" /><circle cx="16" cy="9" r="1.500" /></g><g fill="#777"><circle cx="19" cy="18" r="1.200" /><circle cx="25" cy="18" r="1.200" /></g></svg>
      </button>

      <div class="tray">
        <svg class="weather" viewBox="0 0 22 16"><path d="M5 15a5 5 0 0 1 0-9 6 6 0 0 1 11 0 5 5 0 0 1 1 9z" fill="#fff" /></svg>
        <span class="temp">12℃</span>
        <button v-for="g in tray" :key="g" :aria-label="g"><svg class="ico" viewBox="0 0 16 16" v-html="glyphs[g]" /></button>
        <span class="badge">64</span>
        <time class="clock"><span>19:01</span><span>2020/4/20 星期一</span></time>
        <button class="peek" aria-label="显示桌面" />
      </div>
    </footer>

    <section class="balloon" aria-label="通讯中心">
      <svg viewBox="0 0 16 16"><circle cx="8" cy="8" r="7" fill="#2c62c4" stroke="#8aa6dc" /><path d="M8 7v5M8 3v2" stroke="#fff" stroke-width="2" /></svg>
      <strong>通讯中心</strong>
      <button aria-label="关闭"><svg viewBox="0 0 14 14"><path d="M3 3l8 8M11 3l-8 8" stroke="#000" stroke-width="2" /></svg></button>
      <p>。</p>
    </section>

    <div class="ime">
      <button v-for="g in ['keyboard', 'person', 'shirt', 'grid']" :key="g" :aria-label="g"><svg class="ico" viewBox="0 0 16 16" v-html="glyphs[g]" /></button>
    </div>

    <svg class="halo" viewBox="0 0 20 90" aria-hidden="true">
      <path d="M20 4H9Q5 4 5 8v32q0 3 3 3h12" fill="#fff" fill-opacity=".6" stroke="#ccc" />
      <path d="M8 56v22q0 5-5 5" fill="none" stroke="#fff" stroke-width="2" stroke-opacity=".8" />
    </svg>

    <div class="brand">
      <svg viewBox="0 0 48 50" aria-hidden="true">
        <g fill="none" stroke="#d0d1d6" stroke-width="4" stroke-linejoin="round" stroke-linecap="round">
          <path d="M3 7v30c0 9 7 12 13 8l25-14c6-4 6-9 0-13L20 4c-5-3-9-1-9 4v25c0 4 3 5 6 3" />
        </g>
        <path d="M19 19v12l9-6z" fill="#d0d1d6" /><path d="M31 20v10" stroke="#d0d1d6" stroke-width="2" />
      </svg>
      <div>
        <strong>溜溜自学</strong>
        <span>ZiXUE.3D66.COM</span>
      </div>
    </div>
  </div>
</template>

<style>
html, body, #app { height: 100%; }
body { margin: 0; overflow: hidden; }
</style>

<style scoped>
* { box-sizing: border-box; }
.desktop { position: relative; display: flex; flex-direction: column; height: 100vh; padding-top: 2px; overflow: hidden; background: linear-gradient(#5a5763 0 1px, #f4f6f9 1px); font: 12px/16px "Noto Sans", "Noto Sans CJK SC", sans-serif; color: #000; }
.defs { position: absolute; width: 0; height: 0; }
button { margin: 0; padding: 0; border: 0; background: none; color: inherit; font: inherit; }
p { margin: 0; }
i { display: block; flex: none; }
svg { display: block; flex: none; }
.ico { width: 16px; height: 16px; overflow: visible; }

.window { display: flex; flex: 1; flex-direction: column; min-height: 0; margin: 0 2px; padding: 0 8px 8px 7px; border: 1px solid #16222c; border-right-color: #2a8793; border-radius: 8px 8px 0 0; background: linear-gradient(#b5cde5, #97b4d3 14px, #bcd3ea 29px, #b9d1ea); }
.title { display: flex; align-items: center; flex: none; height: 29px; padding: 6px 2px 0; }
h1 { flex: 1; margin: 0 0 0 4px; font-size: 12px; font-weight: 400; line-height: 18px; }
.caption { display: flex; gap: 3px; }
.caption button { width: 30px; height: 18px; border: 1px solid #5b7594; border-radius: 2px; background: linear-gradient(#c8d9eb 45%, #9db7d3 50%, #b7cde3); box-shadow: inset 0 0 0 1px #dde9f5; }
.caption svg { width: 28px; height: 16px; }
.caption .close { border-color: #5a1f1f; background: linear-gradient(#dd9384 45%, #bf3f2b 50%, #cf6a55); box-shadow: inset 0 0 0 1px #e6aca1; }

.menu { display: flex; align-items: center; flex: none; height: 20px; padding-left: 7px; border-bottom: 1px solid #b3b9cd; background: linear-gradient(#fff, #eceff8 45%, #d6dbed 55%, #dfe4f3); }
.menu > button { padding: 1px 7px 0 8px; }
.menu > button:first-of-type { padding-left: 7px; }
.mdi { display: flex; gap: 1px; margin-left: auto; }
.mdi button { width: 18px; height: 18px; border: 1px solid #a3b7d0; background: #f1f5fb; }
.mdi svg { width: 16px; height: 16px; }

.bars { display: flex; flex: none; height: 28px; background: #f0f0f0; }
.bar { display: flex; align-items: center; height: 28px; padding: 2px 4px 0; border-top: 1px solid #fff; border-right: 1px solid #a0a0a0; border-bottom: 1px solid #a8a8a8; }
.grip { width: 6px; height: 22px; margin-right: 3px; border: solid #a6a6a6; border-width: 0 1px; background: linear-gradient(90deg, #fff 1px, #f0f0f0 1px 4px, #fff 4px); }
.tool { display: flex; align-items: center; justify-content: center; width: 23px; height: 22px; }
.drop { display: flex; justify-content: center; width: 13px; }
.sep { width: 1px; height: 20px; margin: 0 3px 0 2px; background: #9a9a9a; }
.arrow { width: 0; height: 0; border: solid transparent; border-width: 4px 4px 0; border-top-color: #999; }
.drop .arrow { border-width: 3px 3px 0; }
.combo { position: relative; display: flex; align-items: center; height: 22px; padding-left: 4px; border: 1px solid #a5a5a5; border-radius: 2px; background: linear-gradient(#fff, #fff) right / 19px 100% no-repeat, #f0f0f0; box-shadow: inset 0 0 0 1px #fff; }
.combo select { flex: 1; min-width: 0; height: 18px; padding: 0; border: 0; outline: 0; appearance: none; background: none; color: #6d6d6d; font: 10px/18px "DejaVu Sans Mono", "Noto Sans CJK SC", monospace; }
.combo .arrow { margin: 2px 4px 0 0; }
.w100 { width: 100px; } .w120 { width: 121px; } .w125 { width: 125px; } .w150 { width: 150px; } .w160 { width: 160px; } .w175 { width: 175px; } .w298 { width: 299px; }
.mixed { padding-left: 8px; }
.mixed select { font: 11px/18px "Liberation Mono", "Noto Sans CJK SC", monospace; }
.han { padding-left: 8px; }
.han select { font: 12px/18px "Noto Sans CJK SC", sans-serif; }
.lead { gap: 4px; }
.swatch { width: 10px; height: 10px; border: 1px solid #000; background: #fff; }
.rule { width: 36px; height: 1px; background: #000; }
.lead .rule + select { padding-left: 1px; }
.rule.long { width: 60px; }
.layer { gap: 8px; padding-left: 2px; }
.states { display: flex; align-items: center; }

.work { display: flex; flex: 1; min-height: 0; background: #f0f0f0; }
.dock { flex: none; width: 25px; padding-top: 2px; }
.vbar { display: flex; flex-direction: column; align-items: center; padding: 2px 0 5px; border-right: 1px solid #a0a0a0; border-bottom: 1px solid #a0a0a0; }
.vbar + .vbar { margin-top: 3px; }
.vgrip { width: 20px; height: 6px; margin-bottom: 1px; border: solid #a6a6a6; border-width: 1px 0; background: #fff; }
.sheet { display: flex; flex: 1; flex-direction: column; min-width: 0; margin: 0 3px 4px 2px; border: solid #8d8d8d; border-width: 2px 0 0 1px; }
.dock.right { width: 24px; }
.canvas { position: relative; flex: 1; min-height: 0; overflow: hidden; background: #000; }
.layer-fill { position: absolute; inset: 0; width: 100%; height: 100%; }
.over { pointer-events: none; }
.ucs { position: absolute; left: 0; bottom: 0; width: 100px; height: 100px; }
.dyn { position: absolute; left: 478px; top: 348px; display: flex; gap: 3px; }
.cell { height: 22px; padding: 0 3px; border: 1px solid #b9bbdc; border-radius: 0; outline: 0; background: #15104f; color: #c9cae4; font: 12px/20px "Noto Sans", "Noto Sans CJK SC", sans-serif; }
.ask { display: flex; align-items: center; justify-content: space-between; width: 95px; }
.ask svg { width: 10px; height: 10px; }
.xval { width: 74px; background: #fff; color: #000; }
.xval::selection { background: #3399ff; color: #fff; }
.yval { width: 60px; }

.tabs { display: flex; flex: none; height: 15px; border-bottom: 1px solid #fff; }
.nav { width: 18px; border: solid #a9a9a9; border-width: 0 1px 1px 0; }
.nav svg { width: 16px; height: 13px; }
.tab { display: flex; height: 14px; margin-left: -1px; border-bottom: 1px solid #000; line-height: 14px; }
.nav + .tab { margin-left: 5px; }
.tab.on { background: #000; color: #fff; clip-path: polygon(0 0, 100% 0, calc(100% - 6px) 100%, 6px 100%); }
.edge { width: 6px; height: 14px; }

.command { display: flex; flex: none; height: 58px; padding: 10px 6px 3px 6px; border-top: 2px solid #8c8c8c; border-bottom: 2px solid #a0a0a0; background: #f0f0f0; }
.command .grip { height: 42px; margin-right: 5px; }
.lines { flex: 1; min-width: 0; border: solid #777; border-width: 2px 0 0 1px; background: #fff; font: 16px/20px "Noto Sans CJK SC", sans-serif; }
.lines p { flex: 1; padding-left: 1px; white-space: pre; }
.latin { font-family: "Liberation Mono", monospace; font-size: 13px; }
.history { display: flex; height: 22px; border-bottom: 1px solid #999; }
.history p { line-height: 14px; }
.entry { display: flex; height: 19px; }
.entry p { line-height: 18px; }
.hscroll { display: flex; align-items: center; justify-content: center; width: 76px; padding-left: 22px; background: #f0f0f0; }
.hscroll svg { width: 8px; height: 10px; }
.spin { display: flex; flex-direction: column; align-items: center; justify-content: space-around; width: 16px; border: 1px solid #ddd; background: #f5f5f5; }
.spin svg { width: 8px; height: 8px; }

.status { display: flex; align-items: center; flex: none; gap: 4px; height: 22px; padding: 4px 16px 0 4px; background: #f0eeee; font: 12px/15px "Noto Sans CJK SC", sans-serif; }
.coords { width: 186px; height: 18px; margin-right: 1px; padding: 0 1px; border: 1px solid; border-color: #a0a0a0 #fff #fff #a0a0a0; font: 10px/16px "DejaVu Sans Mono", monospace; white-space: pre; }
.status button { height: 18px; padding: 0 1px; border: 1px solid; border-color: #fff #a0a0a0 #a0a0a0 #fff; white-space: nowrap; }
.status button.on { border-color: #222 #fff #fff #222; }
.status button:nth-of-type(7), .status button:nth-of-type(8) { font: 10px/15px "DejaVu Sans Mono", monospace; }
.statusicon { width: 16px; height: 16px; }
.comm { margin: 0 18px 0 auto; }

.taskbar { display: flex; flex: none; height: 40px; gap: 3px; border-top: 1px solid #8fa3bd; background: linear-gradient(90deg, #7088aa 0 40px, #a2badb 64px, #a2badb 57%, #8094ad 61%, #8094ad); }
.start { width: 57px; padding: 1px 0 0 8px; }
.start svg { width: 38px; height: 38px; }
.app { display: flex; align-items: center; justify-content: center; width: 59px; border: 1px solid #63799a; border-radius: 3px; background: linear-gradient(135deg, #dbe6f3, #b4c9e2 50%, #bfd2e8); box-shadow: inset 0 0 0 1px #e6eef7; }
.app svg { width: 32px; height: 32px; }
.app.multi { border-right: 3px double #63799a; }
.app.current { background: linear-gradient(#f2f7fb, #dbe8f5); }
.tray { display: flex; align-items: center; margin-left: auto; color: #fff; }
.weather { width: 22px; height: 16px; }
.temp { width: 35px; margin-left: 5px; color: #e4e9f0; }
.tray button:not(.peek) { display: flex; justify-content: center; width: 24px; }
.badge { width: 22px; height: 22px; margin: 0 10px 0 6px; border: 2px solid #c9c45c; border-radius: 50%; background: #455; font-size: 11px; font-weight: 700; line-height: 18px; text-align: center; }
.clock { display: flex; flex-direction: column; align-items: center; width: 102px; line-height: 18px; white-space: nowrap; }
.peek { width: 14px; height: 39px; margin-left: 8px; border: 1px solid #5a6b80; background: linear-gradient(135deg, #a6b5c6, #6d7f94 60%, #8c9bae); }

.balloon { position: absolute; right: 55px; bottom: 77px; display: flex; flex-wrap: wrap; align-items: flex-start; width: 184px; height: 74px; padding: 8px 8px 0; border: 1px solid #000; border-radius: 14px; background: #ffffe1; }
.balloon > svg { width: 16px; height: 16px; }
.balloon strong { flex: 1; margin-left: 12px; }
.balloon button { width: 16px; height: 16px; border: 1px solid #999; background: #f0f0f0; }
.balloon button svg { width: 14px; height: 14px; }
.balloon p { width: 100%; padding-left: 152px; line-height: 12px; }
.ime { position: absolute; right: 0; bottom: 42px; display: flex; align-items: center; width: 84px; height: 21px; background: #fff; }
.ime button { display: flex; justify-content: center; flex: 1; }
.halo { position: absolute; right: 300px; bottom: 25px; width: 20px; height: 90px; }
.brand { position: absolute; right: 76px; bottom: 20px; display: flex; align-items: center; width: 235px; height: 115px; padding-left: 13px; gap: 16px; background: #223058; color: #d0d1d6; }
.brand > svg { width: 48px; height: 50px; }
.brand div { display: flex; flex-direction: column; }
.brand strong { font: 700 36px/36px "Noto Sans CJK SC", sans-serif; }
.brand span { padding-top: 2px; font: 17px/18px "Inter", sans-serif; }
</style>
